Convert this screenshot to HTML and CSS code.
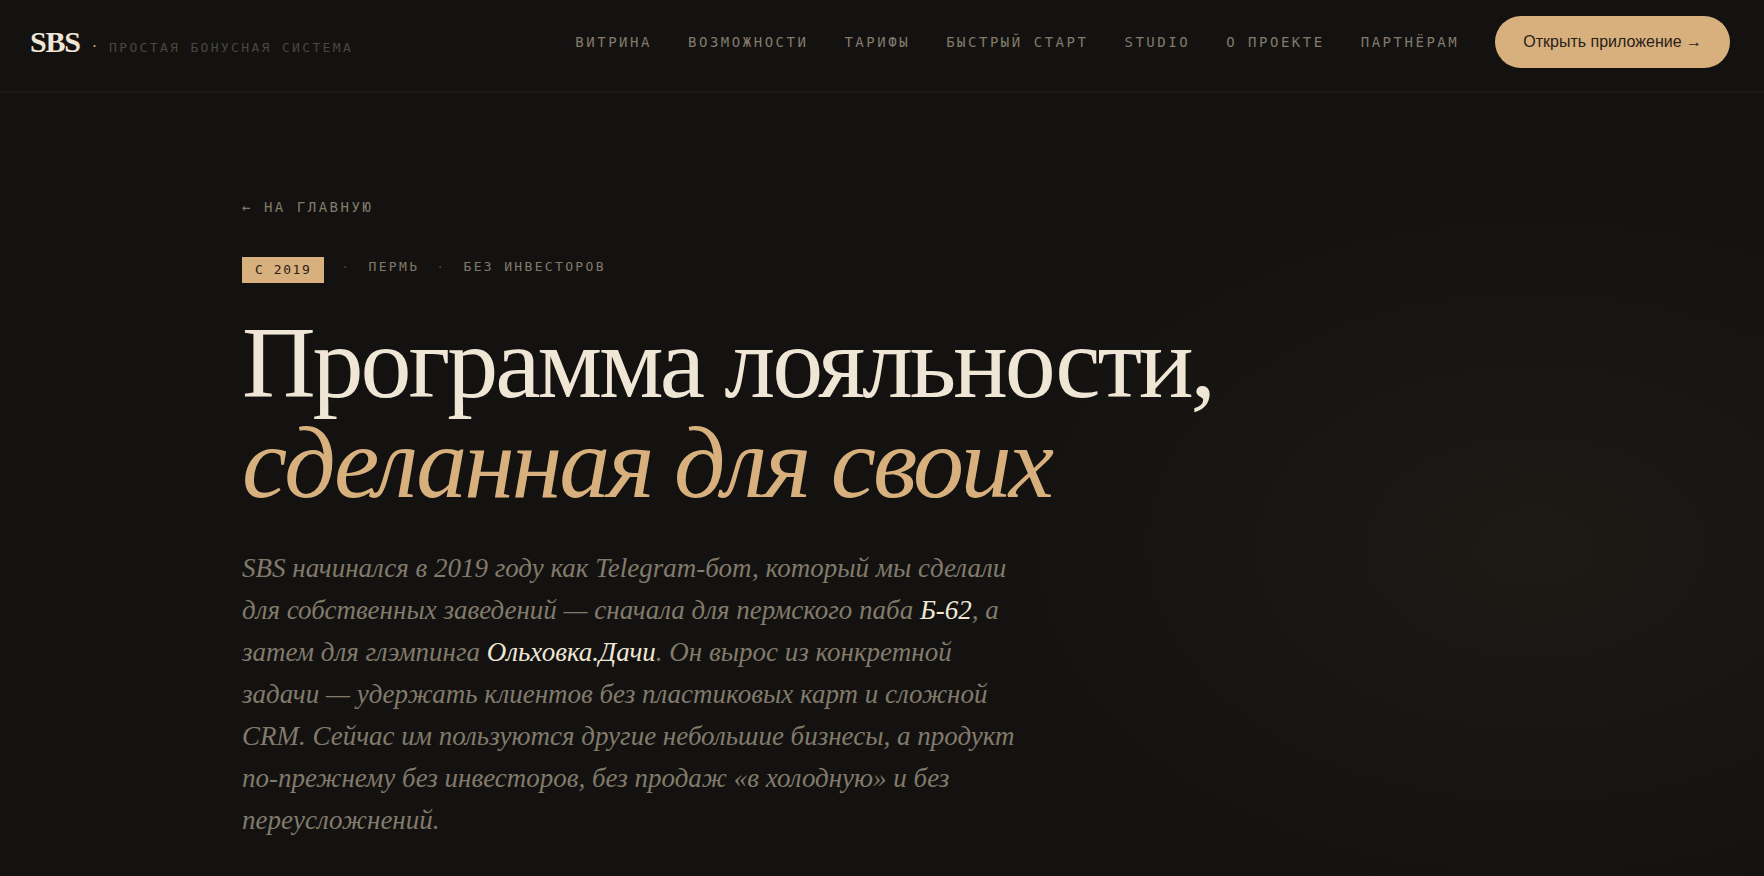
FILE: index.html
```html
<!DOCTYPE html>
<html lang="ru">
<head>
  <meta charset="UTF-8">
  <meta name="viewport" content="width=device-width, initial-scale=1.0">
  <title>SBS · О проекте</title>
  <link rel="stylesheet" href="styles.css">
</head>
<body>
  <header class="header">
    <a href="#" class="logo">
      <span class="logo-name">SBS</span>
      <span class="logo-dot">·</span>
      <span class="logo-sub">Простая бонусная система</span>
    </a>
    <nav class="nav">
      <a href="#">Витрина</a>
      <a href="#">Возможности</a>
      <a href="#">Тарифы</a>
      <a href="#">Быстрый старт</a>
      <a href="#">Studio</a>
      <a href="#">О проекте</a>
      <a href="#">Партнёрам</a>
      <button type="button" class="open-btn">Открыть приложение →</button>
    </nav>
  </header>

  <main class="hero">
    <div class="container">
      <a href="#" class="back">← На главную</a>

      <div class="meta">
        <span class="badge">С 2019</span>
        <span class="sep">·</span>
        <span>Пермь</span>
        <span class="sep">·</span>
        <span>Без инвесторов</span>
      </div>

      <h1 class="title">Программа лояльности,<br><em>сделанная для своих</em></h1>

      <p class="lead">
        SBS начинался в 2019 году как Telegram-бот, который мы сделали<br>
        для собственных заведений — сначала для пермского паба <strong>Б-62</strong>, а<br>
        затем для глэмпинга <strong>Ольховка.Дачи</strong>. Он вырос из конкретной<br>
        задачи — удержать клиентов без пластиковых карт и сложной<br>
        CRM. Сейчас им пользуются другие небольшие бизнесы, а продукт<br>
        по-прежнему без инвесторов, без продаж «в холодную» и без<br>
        переусложнений.
      </p>
    </div>
  </main>
</body>
</html>
```
FILE: styles.css
```css
:root {
  --bg: #131210;
  --line: #1e1b19;
  --cream: #efe6d6;
  --gold: #d7b07d;
  --muted: #827a6b;
  --dim: #4a4643;
  --serif: "Liberation Serif", "Times New Roman", serif;
  --sans: "Liberation Sans", Arial, sans-serif;
  --mono: "DejaVu Sans Mono", monospace;
}

* {
  margin: 0;
  padding: 0;
  box-sizing: border-box;
}

body {
  display: flex;
  flex-direction: column;
  min-height: 100vh;
  background: var(--bg);
  color: var(--cream);
  font-family: var(--serif);
}

a {
  color: inherit;
  text-decoration: none;
}

/* header */
.header {
  display: flex;
  align-items: center;
  justify-content: space-between;
  padding: 16px 34px 23px 30px;
  border-bottom: 2px solid var(--line);
}

.logo {
  display: flex;
  align-items: baseline;
  gap: 12px;
}

.logo-name {
  font-size: 30px;
  font-weight: bold;
  letter-spacing: -0.04em;
}

.logo-dot {
  color: var(--gold);
  font-size: 16px;
}

.logo-sub {
  font-family: var(--mono);
  font-size: 13px;
  letter-spacing: 0.18em;
  text-transform: uppercase;
  color: var(--dim);
}

.nav {
  display: flex;
  align-items: center;
  gap: 36px;
}

.nav a,
.back {
  font-family: var(--mono);
  font-size: 14px;
  letter-spacing: 0.18em;
  text-transform: uppercase;
  color: var(--muted);
}

.open-btn {
  height: 52px;
  padding: 0 28px;
  border: none;
  border-radius: 26px;
  background: var(--gold);
  color: #2a2118;
  font-family: var(--sans);
  font-size: 16px;
  cursor: pointer;
}

/* hero */
.hero {
  flex: 1;
  padding: 102px 40px 32px;
  background: radial-gradient(ellipse 580px 380px at 87% 58%, #1b1a15, var(--bg));
}

.container {
  max-width: 1280px;
  margin: 0 auto;
}

.back {
  display: block;
  line-height: 24px;
}

.meta {
  display: flex;
  align-items: flex-start;
  gap: 17px;
  margin-top: 38px;
  font-family: var(--mono);
  font-size: 13px;
  line-height: 20px;
  letter-spacing: 0.18em;
  text-transform: uppercase;
  color: var(--muted);
}

.badge {
  padding: 3px 13px;
  background: var(--gold);
  color: #2a2118;
  letter-spacing: 0.12em;
}

.sep {
  color: var(--dim);
}

.title {
  margin-top: 30px;
  font-size: 102px;
  font-weight: normal;
  line-height: 100px;
  letter-spacing: -0.03em;
}

.title em {
  color: var(--gold);
}

.lead {
  margin-top: 34px;
  font-size: 27px;
  font-style: italic;
  line-height: 42px;
  color: var(--muted);
}

.lead strong {
  color: var(--cream);
  font-weight: normal;
}
```
